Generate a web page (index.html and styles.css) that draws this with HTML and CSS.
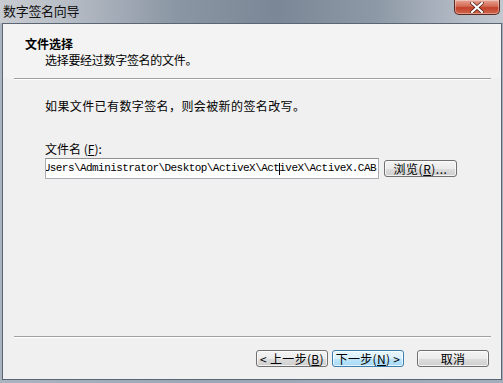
FILE: index.html
```html
<!DOCTYPE html>
<html lang="zh-CN">
<head>
    <meta charset="UTF-8">
    <meta name="viewport" content="width=device-width, initial-scale=1.0">
    <title>数字签名向导</title>
    <link rel="stylesheet" href="styles.css">
</head>
<body>
    <div class="window">
        <!-- Titulek okna -->
        <div class="titlebar">
            <span class="title">数字签名向导</span>
            <div class="close">
                <svg width="14" height="11" viewBox="0 0 14 11">
                    <path d="M2 1 L12 10 M12 1 L2 10" stroke="#4a1a12" stroke-width="3.6" stroke-linecap="square"/>
                    <path d="M2 1 L12 10 M12 1 L2 10" stroke="#ffffff" stroke-width="2.2" stroke-linecap="square"/>
                </svg>
            </div>
        </div>

        <div class="client">
            <!-- Hlavička kroku -->
            <div class="header">
                <div class="header-title">文件选择</div>
                <div class="header-sub">选择要经过数字签名的文件。</div>
            </div>
            <div class="sep"></div>

            <!-- Obsah -->
            <div class="content">
                <p class="note">如果文件已有数字签名，则会被新的签名改写。</p>
                <div class="label">文件名 (<u>F</u>):</div>
                <div class="file-row">
                    <div class="path"><span>C:\Users\Administrator\Desktop\ActiveX\Act<i class="caret"></i>iveX\ActiveX.CAB</span></div>
                    <button class="btn browse">浏览(<u>R</u>)...</button>
                </div>
            </div>
            <div class="sep"></div>

            <!-- Tlačítka -->
            <div class="footer">
                <button class="btn">&lt; 上一步(<u>B</u>)</button>
                <button class="btn default">下一步(<u>N</u>) &gt;</button>
                <button class="btn cancel">取消</button>
            </div>
        </div>
    </div>
</body>
</html>
```

FILE: styles.css
```css
body {
    margin: 0;
    padding: 0;
    font-family: "Noto Sans CJK SC", "Liberation Sans", sans-serif;
    font-size: 12px;
    color: #000;
    background: #fff;
}

.window {
    width: 503px;
    height: 383px;
    display: flex;
    flex-direction: column;
    background: linear-gradient(90deg, #aab4c1 0%, #9ba7b6 40%, #a3aebc 100%);
}

.titlebar {
    height: 23px;
    display: flex;
    justify-content: space-between;
    align-items: flex-start;
    padding-right: 3px;
    background: linear-gradient(90deg, #c9ccd1 0%, #b9bfc7 12%, #8b96a4 35%, #7b8796 55%, #8e99a7 75%, #b3bbc5 92%, #c2c8d0 100%);
}

.title {
    padding: 2px 0 0 3px;
    font-size: 13px;
    line-height: 18px;
    letter-spacing: -0.3px;
    color: #111;
}

.close {
    width: 44px;
    height: 14px;
    border: 1px solid #5a2a22;
    border-top: none;
    border-radius: 0 0 5px 5px;
    background: linear-gradient(180deg, #e8a596 0%, #d46a53 45%, #c4412a 55%, #d0684f 100%);
    box-shadow: inset 0 0 0 1px rgba(255, 255, 255, 0.35);
    display: flex;
    align-items: center;
    justify-content: center;
}

.client {
    flex: 1;
    margin: 0 1px 3px 2px;
    border: 1px solid #5b6675;
    background: #f0f0f0;
    display: flex;
    flex-direction: column;
}

.header {
    height: 42px;
    padding: 12px 0 0 22px;
    background: #f3f3f3;
}

.header-title {
    font-weight: bold;
    line-height: 16px;
}

.header-sub {
    padding-left: 20px;
    line-height: 16px;
    letter-spacing: -0.3px;
}

.sep {
    height: 0;
    margin: 0 10px 0 11px;
    border-top: 1px solid #a0a0a0;
    border-bottom: 1px solid #ffffff;
}

.content {
    flex: 1;
    padding: 18px 0 0 42px;
}

.note {
    margin: 0;
    line-height: 16px;
    letter-spacing: 0.4px;
}

.label {
    margin-top: 27px;
    line-height: 16px;
}

.file-row {
    margin-top: 1px;
    display: flex;
    align-items: center;
}

.path {
    width: 330px;
    height: 19px;
    padding: 0 2px 0 0;
    border: 1px solid #abadb3;
    border-top-color: #8e8f8f;
    background: #fff;
    display: flex;
    justify-content: flex-end;
    align-items: center;
    overflow: hidden;
    white-space: nowrap;
    font-family: "Liberation Mono", "DejaVu Sans Mono", monospace;
    font-size: 11px;
    letter-spacing: -0.56px;
}

.caret {
    display: inline-block;
    width: 0;
    height: 12px;
    border-left: 1px solid #000;
    margin-right: -1px;
    vertical-align: middle;
}

.btn {
    height: 17px;
    padding: 0;
    font-family: "Noto Sans CJK SC", "Liberation Sans", sans-serif;
    font-size: 12px;
    line-height: 15px;
    color: #000;
    border: 1px solid #707070;
    border-radius: 3px;
    background: linear-gradient(180deg, #f4f4f4 0%, #ebebeb 50%, #dddddd 51%, #cfcfcf 100%);
    box-shadow: inset 0 0 0 1px rgba(255, 255, 255, 0.7);
}

.browse {
    width: 73px;
    margin-left: 5px;
    letter-spacing: 0.5px;
}

.footer {
    height: 29px;
    padding: 12px 12px 0 0;
    display: flex;
    justify-content: flex-end;
    align-items: flex-start;
}

.footer .btn {
    width: 72px;
    letter-spacing: 0.3px;
}

.footer .default {
    margin-left: 4px;
    border-color: #3c7fb1;
    background: linear-gradient(180deg, #eaf6fd 0%, #d9f0fc 50%, #bee6fd 51%, #a7d9f5 100%);
}

.footer .cancel {
    margin-left: 13px;
}
```
